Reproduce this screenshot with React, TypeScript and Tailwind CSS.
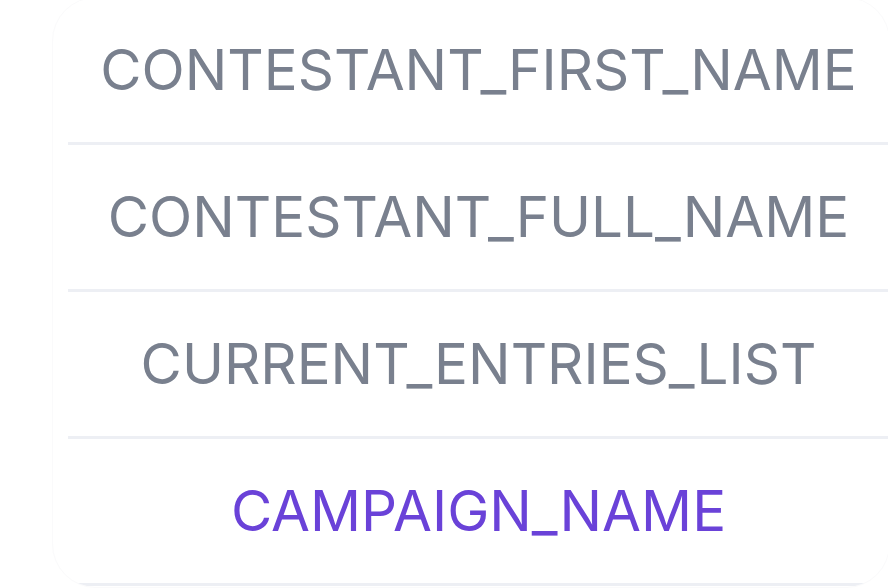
import React from "react";

const items = [
  { label: "CONTESTANT_FIRST_NAME", active: false },
  { label: "CONTESTANT_FULL_NAME", active: false },
  { label: "CURRENT_ENTRIES_LIST", active: false },
  { label: "CAMPAIGN_NAME", active: true },
];

export default function App() {
  return (
    <div className="w-[888px] h-[588px] bg-white overflow-hidden" style={{ fontFamily: "Inter, 'Noto Sans', sans-serif" }}>
      <div className="ml-[52px] w-[838px] -mt-[3px] h-[591px] rounded-[44px] border border-[#fafafb] bg-white overflow-hidden flex flex-col">
        {items.map((it) => (
          <div
            key={it.label}
            className="ml-[15px] h-[147px] shrink-0 flex items-center justify-center border-b-[3px] border-[#edeff4]"
          >
            <span
              className={
                "text-[56.5px] leading-none " + (it.active ? "text-[#6a42d8]" : "text-[#79808e]")
              }
            >
              {it.label}
            </span>
          </div>
        ))}
      </div>
    </div>
  );
}
